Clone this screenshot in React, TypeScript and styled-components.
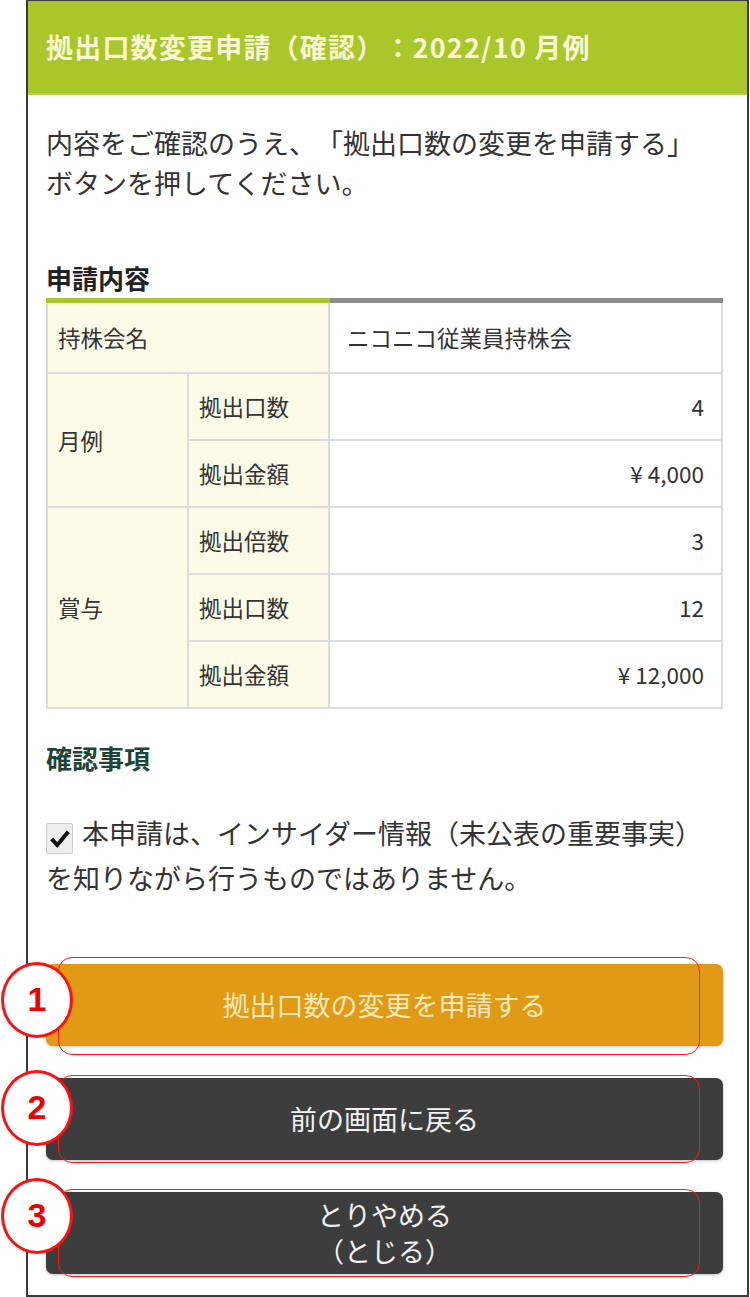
import styled, { createGlobalStyle } from "styled-components";

const GlobalStyle = createGlobalStyle`
    html, body {
        margin: 0;
        padding: 0;
        background: #ffffff;
    }
    body {
        font-family: "Noto Sans CJK JP", "Noto Sans", sans-serif;
        color: #333333;
        text-spacing-trim: space-all;
    }
`

type Sub = { label: string; value: string }

const groups: { name: string; rows: Sub[] }[] = [
    {
        name: "月例",
        rows: [
            {label: "拠出口数", value: "4"},
            {label: "拠出金額", value: "¥ 4,000"},
        ],
    },
    {
        name: "賞与",
        rows: [
            {label: "拠出倍数", value: "3"},
            {label: "拠出口数", value: "12"},
            {label: "拠出金額", value: "¥ 12,000"},
        ],
    },
]

export default function App() {
    return (
        <>
            <GlobalStyle/>
            <Frame>
                <Header>
                    <Title>拠出口数変更申請（確認）：2022/10 月例</Title>
                </Header>

                <Body>
                    <Intro>
                        内容をご確認のうえ、「拠出口数の変更を申請する」<br/>
                        ボタンを押してください。
                    </Intro>

                    <SectionTitle>申請内容</SectionTitle>
                    <Table>
                        <colgroup>
                            <col style={{width: 141}}/>
                            <col style={{width: 141}}/>
                            <col/>
                        </colgroup>
                        <tbody>
                        <tr>
                            <LabelCell colSpan={2} $top>持株会名</LabelCell>
                            <ValueCell $top $left>ニコニコ従業員持株会</ValueCell>
                        </tr>
                        {groups.map((g) =>
                            g.rows.map((r, i) => (
                                <tr key={g.name + r.label}>
                                    {i === 0 && <LabelCell rowSpan={g.rows.length}>{g.name}</LabelCell>}
                                    <LabelCell>{r.label}</LabelCell>
                                    <ValueCell>{r.value}</ValueCell>
                                </tr>
                            ))
                        )}
                        </tbody>
                    </Table>

                    <CheckTitle>確認事項</CheckTitle>
                    <CheckText>
                        <CheckBox>
                            <svg width="22" height="22" viewBox="0 0 20 20">
                                <path d="M2.5 10 L7.5 15.5 L17.5 3.5" fill="none" stroke="#111" strokeWidth="3.6"/>
                            </svg>
                        </CheckBox>
                        本申請は、インサイダー情報（未公表の重要事実）を知りながら行うものではありません。
                    </CheckText>

                    <Buttons>
                        <ButtonRow>
                            <Button $variant="primary">拠出口数の変更を申請する</Button>
                            <Outline $top={-7} $height={98}/>
                            <Marker $top={-2}>1</Marker>
                        </ButtonRow>
                        <ButtonRow>
                            <Button $variant="dark">前の画面に戻る</Button>
                            <Outline $top={-3} $height={88}/>
                            <Marker $top={-8}>2</Marker>
                        </ButtonRow>
                        <ButtonRow>
                            <Button $variant="dark">とりやめる<br/>（とじる）</Button>
                            <Outline $top={-3} $height={88}/>
                            <Marker $top={-14}>3</Marker>
                        </ButtonRow>
                    </Buttons>
                </Body>
            </Frame>
        </>
    );
}

const Frame = styled.div`
    position: relative;
    margin-left: 26px;
    width: 723px;
    height: 1297px;
    box-sizing: border-box;
    border: 2px solid #3a3a3a;
    border-top-width: 1px;
    background: #ffffff;
`

const Header = styled.header`
    height: 94px;
    background: #a9c72a;
    display: flex;
    align-items: center;
    padding-left: 18px;
    box-shadow: inset 0 -2px 0 #b7cf4c;
`

const Title = styled.h1`
    margin: 0 0 4px;
    font-size: 27px;
    font-weight: 700;
    color: #f8f6d4;
    letter-spacing: 1.2px;
`

const Body = styled.div`
    padding: 28px 24px 0 18px;
`

const Intro = styled.p`
    margin: 0;
    font-size: 27px;
    line-height: 40px;
    color: #333;
`

const SectionTitle = styled.h2`
    margin: 55px 0 0;
    font-size: 26px;
    line-height: 40px;
    font-weight: 700;
    color: #222;
`

const Table = styled.table`
    width: 677px;
    border-collapse: collapse;
    table-layout: fixed;
    font-size: 22.5px;
    color: #333;

    td {
        border: 2px solid #dcdcdc;
        height: 67px;
        padding: 0;
        box-sizing: border-box;
    }

    tr:first-child td {
        height: 72px;
    }
`

const LabelCell = styled.td<{ $top?: boolean }>`
    background: #fbfbe8;
    padding-left: 10px !important;
    border-top: ${(p) => (p.$top ? "5px solid #a9c72a" : "2px solid #dcdcdc")} !important;
`

const ValueCell = styled.td<{ $top?: boolean; $left?: boolean }>`
    background: #ffffff;
    text-align: ${(p) => (p.$left ? "left" : "right")};
    padding: ${(p) => (p.$left ? "0 0 0 17px" : "0 17px 0 0")} !important;
    border-top: ${(p) => (p.$top ? "5px solid #8a8a8a" : "2px solid #dcdcdc")} !important;
`

const CheckTitle = styled.h3`
    margin: 29px 0 0;
    font-size: 26px;
    line-height: 40px;
    font-weight: 700;
    color: #1d4437;
`

const CheckText = styled.p`
    margin: 32px 0 0;
    font-size: 27px;
    line-height: 45px;
    color: #333;
`

const CheckBox = styled.span`
    display: inline-flex;
    align-items: center;
    justify-content: center;
    width: 27px;
    height: 31px;
    margin-right: 9px;
    vertical-align: -6px;
    background: #eeeeee;
    border: 1px solid #cdcdcd;
    border-radius: 2px;
    box-sizing: border-box;
`

const Buttons = styled.div`
    margin-top: 64px;
    display: flex;
    flex-direction: column;
    gap: 32px;
`

const ButtonRow = styled.div`
    position: relative;
`

const Button = styled.button<{ $variant: "primary" | "dark" }>`
    display: flex;
    align-items: center;
    justify-content: center;
    width: 100%;
    height: 82px;
    border: none;
    border-radius: 7px;
    font-family: inherit;
    font-size: 27px;
    line-height: 36px;
    text-align: center;
    text-spacing-trim: space-all;
    background: ${(p) => (p.$variant === "primary" ? "#e09a16" : "#3d3d3d")};
    color: ${(p) => (p.$variant === "primary" ? "#f7e9b9" : "#f2f2f2")};
    box-shadow: 0 1px 3px rgba(0, 0, 0, 0.25);
`

const Outline = styled.div<{ $top: number; $height: number }>`
    position: absolute;
    left: 12px;
    width: 642px;
    top: ${(p) => p.$top}px;
    height: ${(p) => p.$height}px;
    border: 1.5px solid #ff1a1a;
    border-radius: 14px;
    box-sizing: border-box;
    pointer-events: none;
`

const Marker = styled.div<{ $top: number }>`
    position: absolute;
    left: -45px;
    top: ${(p) => p.$top}px;
    width: 72px;
    height: 76px;
    border: 3px solid #ff1010;
    border-radius: 50%;
    background: #ffffff;
    box-sizing: border-box;
    display: flex;
    align-items: center;
    justify-content: center;
    font-family: "Liberation Sans", Arial, sans-serif;
    font-size: 34px;
    font-weight: 700;
    color: #ee0000;
`
